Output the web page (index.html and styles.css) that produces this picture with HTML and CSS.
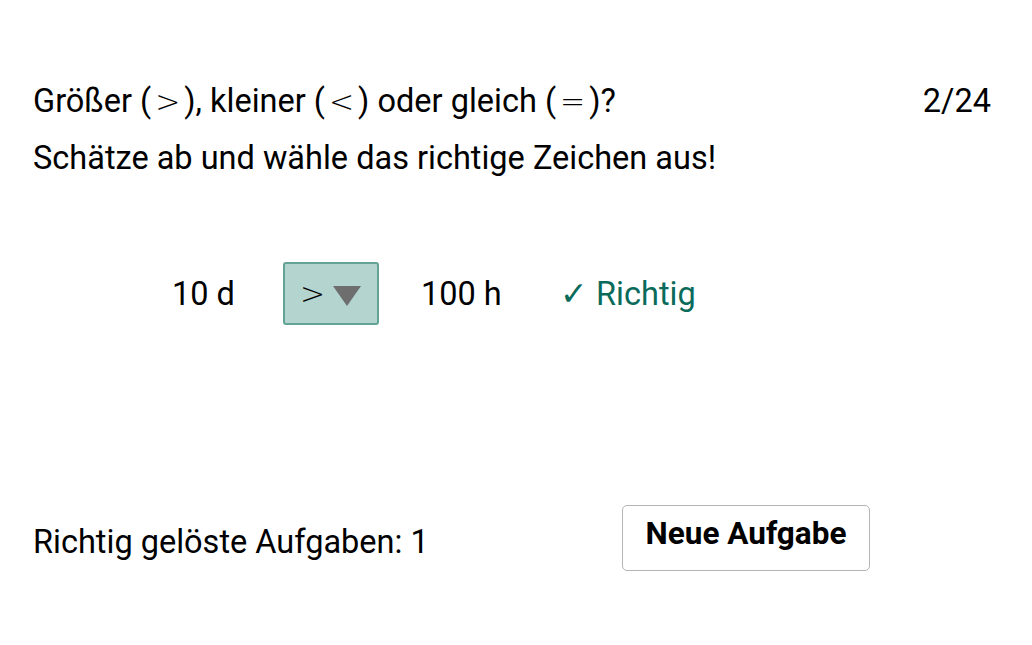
FILE: index.html
```html
<!DOCTYPE html>
<html lang="de">
<head>
<meta charset="utf-8">
<link rel="stylesheet" href="styles.css">
</head>
<body>
<main class="page">
  <header class="head">
    <div class="lines">
      <p class="line">Größer (<span class="m">&gt;</span>), kleiner (<span class="m">&lt;</span>) oder gleich (<span class="m">=</span>)?</p>
      <p class="line">Schätze ab und wähle das richtige Zeichen aus!</p>
    </div>
    <div class="count">2/24</div>
  </header>
  <section class="task">
    <span class="val a">10 d</span>
    <div class="select">
      <span class="sym">&gt;</span>
      <span class="tri"></span>
    </div>
    <span class="val b">100 h</span>
    <span class="ok">✓ Richtig</span>
  </section>
  <footer class="foot">
    <span class="solved">Richtig gelöste Aufgaben: 1</span>
    <button class="btn">Neue Aufgabe</button>
  </footer>
</main>
</body>
</html>
```
FILE: styles.css
```css
html, body { margin: 0; padding: 0; background: #fff; }
body { font-family: Roboto, "Liberation Sans", sans-serif; color: #000; font-size: 32.5px; }
.page { width: 1032px; height: 645px; box-sizing: border-box; padding: 73px 41px 0 33px; }
.head { display: flex; justify-content: space-between; align-items: flex-start; }
.line { margin: 0; line-height: 56px; }
.m { font-family: "DejaVu Sans", sans-serif; font-weight: 200; font-size: 30px; padding: 0 4px; }
.count { line-height: 56px; }
.task { display: flex; align-items: center; margin-top: 76px; padding-left: 139px; height: 63px; }
.val.a { width: 111px; }
.select { box-sizing: border-box; width: 96px; height: 63px; background: #b3d4cf; border: 2px solid #63a396; border-radius: 3px; display: flex; align-items: center; padding-left: 15px; gap: 8px; }
.sym { font-family: "DejaVu Sans", sans-serif; font-weight: 200; font-size: 30px; width: 25px; text-align: center; }
.tri { width: 0; height: 0; border-left: 14px solid transparent; border-right: 14px solid transparent; border-top: 20px solid #6e6e6e; margin-top: 4px; }
.val.b { margin-left: 42px; width: 139px; }
.ok { color: #0a6b5b; }
.foot { display: flex; align-items: center; margin-top: 180px; }
.solved { width: 589px; padding-top: 7px; }
.btn { font-family: inherit; font-size: 31.5px; font-weight: bold; background: #fff; border: 1.5px solid #b4b4b4; border-radius: 5px; width: 248px; height: 66px; padding: 0 0 9px; color: #000; }
```
